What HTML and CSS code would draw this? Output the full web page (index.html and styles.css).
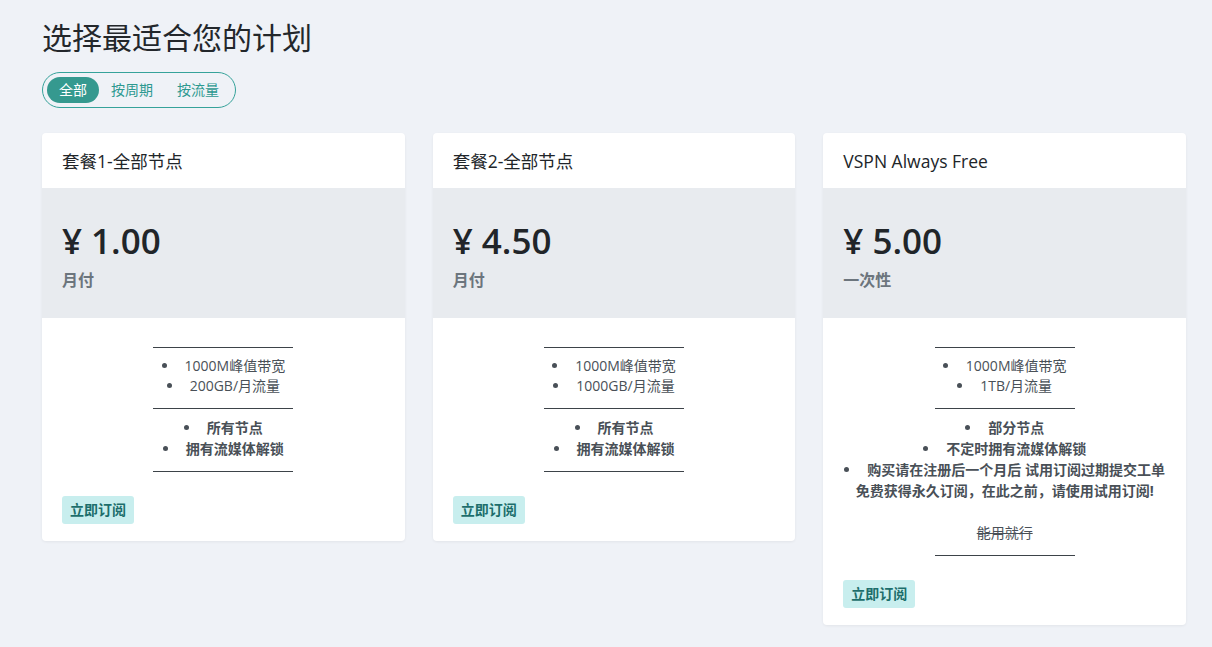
FILE: index.html
```html
<!DOCTYPE html>
<html lang="zh-CN">
<head>
  <meta charset="UTF-8">
  <title>选择最适合您的计划</title>
  <link rel="stylesheet" href="styles.css">
</head>
<body>
  <div class="page">
    <h1 class="page-title">选择最适合您的计划</h1>

    <div class="tabs">
      <span class="tab active">全部</span>
      <span class="tab">按周期</span>
      <span class="tab">按流量</span>
    </div>

    <div class="plans">
      <div class="plan">
        <div class="plan-head">套餐1-全部节点</div>
        <div class="plan-price">
          <div class="amount">¥ 1.00</div>
          <div class="period">月付</div>
        </div>
        <div class="plan-body">
          <div class="desc">
            <hr>
            <ul>
              <li>1000M峰值带宽</li>
              <li>200GB/月流量</li>
            </ul>
            <hr>
            <ul class="strong">
              <li>所有节点</li>
              <li>拥有流媒体解锁</li>
            </ul>
            <hr>
          </div>
          <a href="#" class="btn-buy">立即订阅</a>
        </div>
      </div>

      <div class="plan">
        <div class="plan-head">套餐2-全部节点</div>
        <div class="plan-price">
          <div class="amount">¥ 4.50</div>
          <div class="period">月付</div>
        </div>
        <div class="plan-body">
          <div class="desc">
            <hr>
            <ul>
              <li>1000M峰值带宽</li>
              <li>1000GB/月流量</li>
            </ul>
            <hr>
            <ul class="strong">
              <li>所有节点</li>
              <li>拥有流媒体解锁</li>
            </ul>
            <hr>
          </div>
          <a href="#" class="btn-buy">立即订阅</a>
        </div>
      </div>

      <div class="plan">
        <div class="plan-head">VSPN Always Free</div>
        <div class="plan-price">
          <div class="amount">¥ 5.00</div>
          <div class="period">一次性</div>
        </div>
        <div class="plan-body">
          <div class="desc">
            <hr>
            <ul>
              <li>1000M峰值带宽</li>
              <li>1TB/月流量</li>
            </ul>
            <hr>
            <ul class="strong">
              <li>部分节点</li>
              <li>不定时拥有流媒体解锁</li>
              <li>购买请在注册后一个月后 试用订阅过期提交工单<br>免费获得永久订阅，在此之前，请使用试用订阅!</li>
            </ul>
            <p class="note"><del>能用就行</del></p>
            <hr>
          </div>
          <a href="#" class="btn-buy">立即订阅</a>
        </div>
      </div>
    </div>
  </div>
</body>
</html>
```

FILE: styles.css
```css
body {
  margin: 0;
  background-color: #eff2f7;
  font-family: "Open Sans", "Noto Sans CJK SC", sans-serif;
  color: #212529;
}

.page {
  padding: 18px 26px 20px 42px;
}

.page-title {
  margin: 0;
  font-size: 30px;
  font-weight: 400;
  line-height: 40px;
  color: #23272b;
}

.tabs {
  display: inline-flex;
  align-items: center;
  margin-top: 14px;
  padding: 4px;
  border: 1px solid #35a29a;
  border-radius: 20px;
}

.tab {
  padding: 0 12px;
  height: 26px;
  line-height: 26px;
  font-size: 14px;
  color: #2d9990;
  border-radius: 13px;
}

.tab.active {
  background-color: #35998f;
  color: #fff;
}

.plans {
  display: flex;
  align-items: flex-start;
  gap: 28px;
  margin-top: 25px;
}

.plan {
  flex: 1;
  background-color: #fff;
  border-radius: 4px;
  box-shadow: 0 1px 3px rgba(0, 0, 0, 0.06);
  overflow: hidden;
}

.plan-head {
  height: 55px;
  line-height: 56px;
  padding: 0 20px;
  font-size: 17.5px;
  color: #212529;
}

.plan-price {
  height: 130px;
  box-sizing: border-box;
  padding: 32px 20px 0;
  background-color: #e8ebef;
}

.amount {
  font-size: 35px;
  line-height: 42px;
  font-weight: 600;
  color: #212529;
}

.period {
  margin-top: 5px;
  font-size: 16px;
  font-weight: 600;
  color: #6c757d;
}

.plan-body {
  padding: 17px 20px 17px;
}

.desc {
  text-align: center;
  font-size: 14px;
  line-height: 20px;
  color: #495057;
}

.desc hr {
  width: 140px;
  margin: 12px auto 8px;
  border: 0;
  border-top: 1px solid #3d4349;
}

.desc ul {
  margin: 0;
  padding: 0;
  list-style: none;
}

.desc li::before {
  content: "";
  display: inline-block;
  width: 5px;
  height: 5px;
  margin-right: 18px;
  border-radius: 50%;
  background-color: #495057;
  vertical-align: middle;
  position: relative;
  top: -2px;
}

.desc ul.strong {
  font-weight: 700;
  line-height: 21px;
}

.note {
  margin: 22px 0 0;
}

.note del {
  text-decoration-thickness: 1px;
}

.btn-buy {
  display: inline-block;
  margin-top: 16px;
  padding: 0 8px;
  height: 28px;
  line-height: 28px;
  border-radius: 3px;
  background-color: #c8eeee;
  color: #1d6e6c;
  font-size: 14px;
  font-weight: 700;
  text-decoration: none;
}
```
